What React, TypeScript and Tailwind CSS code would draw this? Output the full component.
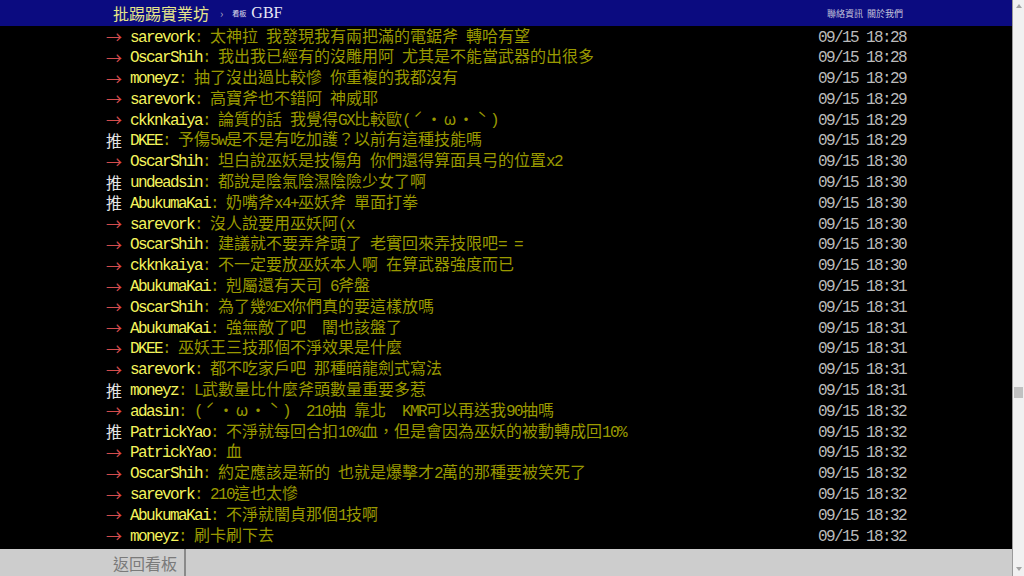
import React from "react";

type Push = { tag: "推" | "→"; user: string; text: string; time: string };

const pushes: Push[] = [
    { tag: "→", user: "sarevork", text: "太神拉 我發現我有兩把滿的電鋸斧 轉哈有望", time: "09/15 18:28" },
    { tag: "→", user: "OscarShih", text: "我出我已經有的沒雕用阿 尤其是不能當武器的出很多", time: "09/15 18:28" },
    { tag: "→", user: "moneyz", text: "抽了沒出過比較慘 你重複的我都沒有", time: "09/15 18:29" },
    { tag: "→", user: "sarevork", text: "高寶斧也不錯阿 神威耶", time: "09/15 18:29" },
    { tag: "→", user: "ckknkaiya", text: "論質的話 我覺得GX比較歐(ˊ・ω・ˋ)", time: "09/15 18:29" },
    { tag: "推", user: "DKEE", text: "予傷5w是不是有吃加護？以前有這種技能嗎", time: "09/15 18:29" },
    { tag: "→", user: "OscarShih", text: "坦白說巫妖是技傷角 你們還得算面具弓的位置x2", time: "09/15 18:30" },
    { tag: "推", user: "undeadsin", text: "都說是陰氣陰濕陰險少女了啊", time: "09/15 18:30" },
    { tag: "推", user: "AbukumaKai", text: "奶嘴斧x4+巫妖斧 單面打拳", time: "09/15 18:30" },
    { tag: "→", user: "sarevork", text: "沒人說要用巫妖阿(x", time: "09/15 18:30" },
    { tag: "→", user: "OscarShih", text: "建議就不要弄斧頭了 老實回來弄技限吧= =", time: "09/15 18:30" },
    { tag: "→", user: "ckknkaiya", text: "不一定要放巫妖本人啊 在算武器強度而已", time: "09/15 18:30" },
    { tag: "→", user: "AbukumaKai", text: "剋屬還有天司 6斧盤", time: "09/15 18:31" },
    { tag: "→", user: "OscarShih", text: "為了幾%EX你們真的要這樣放嗎", time: "09/15 18:31" },
    { tag: "→", user: "AbukumaKai", text: "強無敵了吧  闇也該盤了", time: "09/15 18:31" },
    { tag: "→", user: "DKEE", text: "巫妖王三技那個不淨效果是什麼", time: "09/15 18:31" },
    { tag: "→", user: "sarevork", text: "都不吃家戶吧 那種暗龍劍式寫法", time: "09/15 18:31" },
    { tag: "推", user: "moneyz", text: "L武數量比什麼斧頭數量重要多惹", time: "09/15 18:31" },
    { tag: "→", user: "adasin", text: "(ˊ・ω・ˋ)  210抽 靠北  KMR可以再送我90抽嗎", time: "09/15 18:32" },
    { tag: "推", user: "PatrickYao", text: "不淨就每回合扣10%血，但是會因為巫妖的被動轉成回10%", time: "09/15 18:32" },
    { tag: "→", user: "PatrickYao", text: "血", time: "09/15 18:32" },
    { tag: "→", user: "OscarShih", text: "約定應該是新的 也就是爆擊才2萬的那種要被笑死了", time: "09/15 18:32" },
    { tag: "→", user: "sarevork", text: "210這也太慘", time: "09/15 18:32" },
    { tag: "→", user: "AbukumaKai", text: "不淨就闇貞那個1技啊", time: "09/15 18:32" },
    { tag: "→", user: "moneyz", text: "刷卡刷下去", time: "09/15 18:32" },
];

// half-width runs at 8px per char, everything else on a 16px grid (like the BBS font)
function Term({ s }: { s: string }) {
    const parts = s.match(/[\x20-\x7e]+|[^\x20-\x7e]/g) ?? [];
    return (
        <>
            {parts.map((p, i) =>
                /^[\x20-\x7e]/.test(p) ? (
                    <span key={i} className="whitespace-pre font-['Liberation_Mono',monospace] tracking-[-1.6px]">{p}</span>
                ) : (
                    <span key={i} className="inline-block h-[20.8px] w-[16px] text-center">{p}</span>
                )
            )}
        </>
    );
}

function PushRow({ push }: { push: Push }) {
    return (
        <div className="flex h-[20.8px] items-center leading-[20.8px]">
            <span className={push.tag === "推" ? "inline-block w-[24px] text-[#e4e4e4]" : "inline-block w-[24px] text-[#d44c4c]"}>
                <span className="inline-block h-[20.8px] w-[16px] text-center">{push.tag}</span>
            </span>
            <span className="text-[#f4f45c]"><Term s={push.user} /></span>
            <span className="text-[#990]"><Term s={": " + push.text} /></span>
            <span className="ml-auto text-[#bbb]"><Term s={push.time} /></span>
        </div>
    );
}

function Scrollbar() {
    return (
        <div className="flex w-[12px] flex-col border-l border-[#9a9a9a] bg-[#f1f1f1]">
            <div className="flex h-[12px] items-center justify-center">
                <svg width="6" height="4" viewBox="0 0 6 4"><path d="M3 0 L6 4 L0 4 Z" fill="#a3a3a3" /></svg>
            </div>
            <div className="h-[375px]" />
            <div className="mx-auto h-[11px] w-[9px] bg-[#c1c1c1]" />
            <div className="flex-1" />
            <div className="flex h-[14px] items-center justify-center">
                <svg width="6" height="4" viewBox="0 0 6 4"><path d="M0 0 L6 0 L3 4 Z" fill="#a3a3a3" /></svg>
            </div>
        </div>
    );
}

export default function App() {
    return (
        <div className="flex h-[576px] w-[1024px] overflow-hidden bg-black font-['Noto_Sans_CJK_TC',sans-serif]">
            <div className="flex min-w-0 flex-1 flex-col">
                <header className="flex h-[26px] shrink-0 bg-[#0b0b80]">
                    <div className="mx-auto flex w-[800px] items-center pl-[7px] pr-[3px]">
                        <span className="text-[16px] leading-none text-[#e6e68a]">批踢踢實業坊</span>
                        <span className="ml-[11px] text-[11px] leading-none text-[#b0b0c8]">›</span>
                        <span className="ml-[9px] text-[7px] leading-none text-[#e0e0ee]">看板</span>
                        <span className="ml-[5px] font-['Liberation_Serif',serif] text-[16px] leading-none text-[#e8e8f4]">GBF</span>
                        <div className="ml-auto flex gap-[4px] text-[9px] leading-none text-[#c4c4dc]">
                            <span>聯絡資訊</span>
                            <span>關於我們</span>
                        </div>
                    </div>
                </header>
                <main className="flex-1 bg-black text-[16px]">
                    <div className="mx-auto w-[800px]">
                        {pushes.map((p, i) => (
                            <PushRow key={i} push={p} />
                        ))}
                    </div>
                </main>
                <footer className="flex h-[27px] shrink-0 bg-[#cdcdcd]">
                    <div className="flex w-[184px] items-center justify-end pr-[7px] text-[16px] text-[#7a7a7a]">返回看板</div>
                    <div className="w-[2px] bg-[#8a8a8a]" />
                </footer>
            </div>
            <Scrollbar />
        </div>
    );
}
